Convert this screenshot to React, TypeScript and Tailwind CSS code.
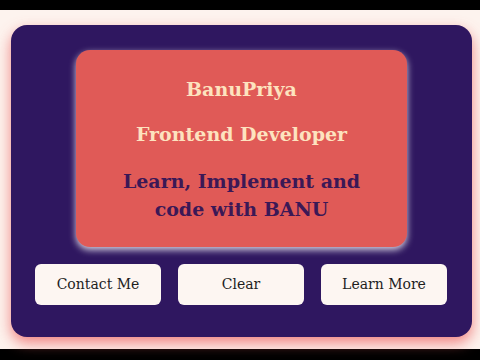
export default function App() {
  const botones = ['Contact Me', 'Clear', 'Learn More'];

  return (
    <main className="w-[480px] h-[360px] bg-black pt-[10px] overflow-hidden">
      <div className="h-[339px] bg-[#fdf3ee] pt-[15px] pl-[11px] pr-[8px]">
        <div className="h-[312px] bg-[#2f1760] rounded-[16px] pt-[25px] shadow-[0_6px_14px_rgba(235,95,95,0.75)]">
          <div className="mx-[65px] h-[197px] bg-[#e05a57] rounded-[14px] shadow-[0_3px_7px_rgba(255,255,255,0.8)] flex flex-col items-center pt-[26px] text-center font-['DejaVu_Serif',serif] font-bold">
            <h1 className="text-[19px] leading-[26px] text-[#fde3bf]">BanuPriya</h1>
            <h2 className="mt-[19px] text-[19px] leading-[26px] text-[#fde3bf]">Frontend Developer</h2>
            <p className="mt-[20px] text-[19px] leading-[28px] text-[#3b1856] w-[270px]">
              Learn, Implement and code with BANU
            </p>
          </div>
          <div className="mt-[17px] px-[24px] flex gap-[17px]">
            {botones.map((b) => (
              <button
                key={b}
                className="w-[126px] h-[41px] bg-[#fdf6f2] rounded-[6px] text-[14px] text-[#1e1e1e] font-['DejaVu_Serif',serif]"
              >
                {b}
              </button>
            ))}
          </div>
        </div>
      </div>
    </main>
  );
}
